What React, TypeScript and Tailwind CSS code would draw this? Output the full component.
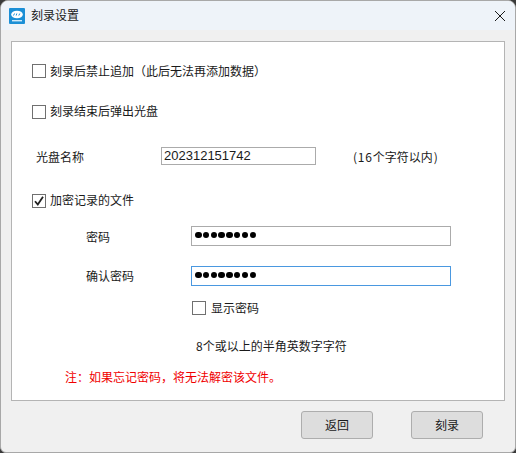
import React from "react";

const font = { fontFamily: '"Noto Sans CJK SC", "Liberation Sans", sans-serif' };

function Check({ checked = false }: { checked?: boolean }) {
  return (
    <span className="flex h-[14px] w-[14px] shrink-0 items-center justify-center border border-[#707070] bg-white">
      {checked && (
        <svg width="12" height="12" viewBox="0 0 12 12" fill="none">
          <path d="M2 6.2 L4.8 9.6 L10 1.8" stroke="#222" strokeWidth="1.8" />
        </svg>
      )}
    </span>
  );
}

function Dots() {
  return (
    <span className="mb-[2px] flex gap-[1.3px]">
      {Array.from({ length: 8 }).map((_, i) => (
        <span key={i} className="h-[6.5px] w-[6.5px] rounded-full bg-black" />
      ))}
    </span>
  );
}

function Btn({ label }: { label: string }) {
  return (
    <button className="h-[28px] w-[72px] rounded-[3px] border border-[#adadad] bg-[#dddddd] text-[12px] text-[#1a1a1a]">
      {label}
    </button>
  );
}

export default function App() {
  return (
    <div style={font} className="h-[453px] w-[516px] overflow-hidden bg-[#3a3a3a]">
      <div className="flex h-full w-full flex-col overflow-hidden rounded-t-[8px] rounded-b-[6px] border border-[#a8a8a8] bg-[#f0f0f0] text-[12px] text-[#1a1a1a]">
        <div className="flex h-[29px] shrink-0 items-center bg-[#eef3f9] pl-[8px] pr-[9px]">
          <svg width="16" height="16" viewBox="0 0 16 16">
            <rect width="16" height="16" rx="1" fill="#1b8fd6" />
            <ellipse cx="8" cy="6.5" rx="5.8" ry="3.8" fill="#fff" />
            <path d="M4.5 7.5 L5.5 5.5 M7.2 7.5 L7.8 5.5 M9.8 7.5 L10.8 5.5" stroke="#1b8fd6" strokeWidth="1" />
            <rect x="3" y="12" width="10" height="1.4" fill="#cfe9fa" />
          </svg>
          <span className="mb-[2px] ml-[6px] leading-none">刻录设置</span>
          <svg className="ml-auto" width="12" height="12" viewBox="0 0 12 12">
            <path d="M1 1 L11 11 M11 1 L1 11" stroke="#1a1a1a" strokeWidth="1" />
          </svg>
        </div>

        <div className="mx-[10px] mt-[11px] h-[360px] shrink-0 border border-[#b4b4b4] bg-white">
          <div className="ml-[20px] mt-[21px] flex h-[16px] items-center gap-[4px]">
            <Check />
            <span>刻录后禁止追加（此后无法再添加数据）</span>
          </div>
          <div className="ml-[20px] mt-[25px] flex h-[16px] items-center gap-[4px]">
            <Check />
            <span className="mb-[2px]">刻录结束后弹出光盘</span>
          </div>
          <div className="ml-[24px] mt-[27px] flex h-[18px] items-center">
            <span className="mt-[2px] w-[125px]">光盘名称</span>
            <div className="flex h-[18px] w-[155px] items-center border border-[#ababab] pl-[2px] font-['Liberation_Sans'] text-[13px]">
              202312151742
            </div>
            <span className="ml-[37px] mt-[1px]">
              <span className="tracking-[0.8px]">(16</span>个字符以内<span className="ml-[1px]">)</span>
            </span>
          </div>
          <div className="ml-[20px] mt-[28px] flex h-[16px] items-center gap-[4px]">
            <Check checked />
            <span className="mb-[2px]">加密记录的文件</span>
          </div>
          <div className="ml-[74px] mt-[17px] flex h-[20px] items-center">
            <span className="mt-[2px] w-[105px]">密码</span>
            <div className="flex h-[20px] w-[260px] items-center border border-[#ababab] pl-[3px]">
              <Dots />
            </div>
          </div>
          <div className="ml-[74px] mt-[20px] flex h-[20px] items-center">
            <span className="w-[105px]">确认密码</span>
            <div className="flex h-[20px] w-[260px] items-center border border-[#4a98e0] pl-[3px]">
              <Dots />
            </div>
          </div>
          <div className="ml-[180px] mt-[14px] flex h-[16px] items-center gap-[5px]">
            <Check />
            <span>显示密码</span>
          </div>
          <div className="ml-[184px] mt-[21px] h-[18px] leading-[18px]">8个或以上的半角英数字字符</div>
          <div className="ml-[53px] mt-[13px] h-[18px] leading-[18px] text-[#f00000]">注：如果忘记密码，将无法解密该文件。</div>
        </div>

        <div className="mr-[32px] mt-[10px] flex justify-end gap-[38px]">
          <Btn label="返回" />
          <Btn label="刻录" />
        </div>
      </div>
    </div>
  );
}
